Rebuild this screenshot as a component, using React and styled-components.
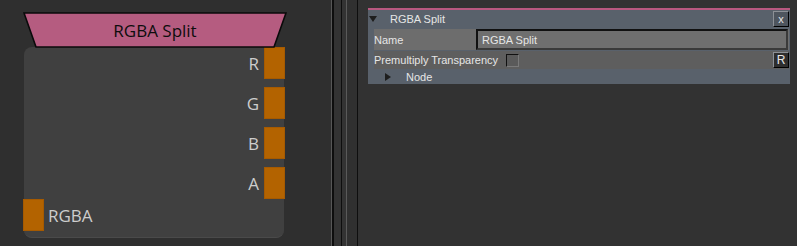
import styled, { createGlobalStyle } from "styled-components";

const Global = createGlobalStyle`
    html, body {
        margin: 0;
        padding: 0;
        background: #2f2f2f;
        overflow: hidden;
    }
`;

const Page = styled.div`
    display: flex;
    width: 797px;
    height: 246px;
`;

const GraphPane = styled.div`
    width: 331px;
    flex-shrink: 0;
    background: #2f2f2f;
    padding: 12px 0 0 23px;
    box-sizing: border-box;
`;

const Splitter = styled.div`
    width: ${(p) => p.w}px;
    flex-shrink: 0;
    background: ${(p) => p.c};
`;

const PropsPane = styled.div`
    flex: 1;
    background: #323232;
    padding: 8px 0 0 10px;
`;

/* ---------- node ---------- */

const Node = styled.div`
    width: 264px;
    font-family: "Open Sans", "Noto Sans", sans-serif;
`;

const Title = styled.div`
    position: relative;
    height: 35px;
    display: flex;
    align-items: center;
    justify-content: center;
    font-size: 17px;
    color: #0d0d0d;

    svg {
        position: absolute;
        inset: 0;
    }

    span {
        position: relative;
        margin-left: 0px;
        margin-top: 1px;
    }
`;

const Body = styled.div`
    margin-left: 1px;
    width: 260px;
    height: 191px;
    box-sizing: border-box;
    background: #404040;
    border-radius: 8px;
    border-bottom: 1px solid #4a4a4a;
    display: flex;
    flex-direction: column;
    justify-content: space-between;
    padding-bottom: 6px;
`;

const Outputs = styled.div`
    display: flex;
    flex-direction: column;
    gap: 8px;
    margin-right: -1px;
`;

const PortRow = styled.div`
    display: flex;
    align-items: center;
    justify-content: ${(p) => (p.$input ? "flex-start" : "flex-end")};
    gap: ${(p) => (p.$input ? 4 : 5)}px;
    height: 32px;
    margin-left: ${(p) => (p.$input ? -1 : 0)}px;
`;

const Port = styled.div`
    width: 21px;
    height: 32px;
    background: #b36300;
    box-shadow: inset 0 0 0 1px #a65a00;
`;

const PortLabel = styled.span`
    font-size: 17px;
    color: #cdcdcd;
    line-height: 1;
`;

/* ---------- properties ---------- */

const Panel = styled.div`
    width: 422px;
    background: #59616b;
    border-top: 2px solid #b8587f;
    font-family: "Liberation Sans", Arial, sans-serif;
    font-size: 11px;
    color: #e6e6e6;
`;

const HeaderRow = styled.div`
    display: flex;
    align-items: center;
    height: 18px;
    padding: 0 1px 1px 1px;
`;

const Tri = styled.span`
    width: 0;
    height: 0;
    border-style: solid;
    border-color: transparent;
    ${(p) =>
        p.$open
            ? "border-width: 6px 4px 0 4px; border-top-color: #1e1e1e;"
            : "border-width: 4px 0 4px 6px; border-left-color: #1e1e1e;"}
`;

const HeaderTitle = styled.span`
    margin-left: 13px;
    flex: 1;
`;

const Bevel = styled.button`
    width: 16px;
    height: 16px;
    padding: 0;
    font-family: inherit;
    font-size: ${(p) => (p.$small ? 11 : 12)}px;
    color: #e6e6e6;
    line-height: 12px;
    background: ${(p) => p.bg};
    border: 1px solid;
    border-color: #8c9096 #000 #000 #8c9096;
    box-sizing: border-box;
    display: flex;
    align-items: center;
    justify-content: center;
`;

const Rows = styled.div`
    margin-left: 6px;
    margin-right: 1px;
    display: flex;
    flex-direction: column;
    gap: 1px;
`;

const NameRow = styled.div`
    display: flex;
    height: 21px;
    background: #6d6d6d;
`;

const Label = styled.div`
    width: 102px;
    display: flex;
    align-items: center;
`;

const Field = styled.div`
    flex: 1;
    display: flex;
    align-items: center;
    padding-left: 4px;
    background: #6f6f6f;
    border: 2px solid;
    border-color: #111 #3a3a3a #3a3a3a #111;
    margin-right: 1px;
`;

const CheckRow = styled.div`
    display: flex;
    align-items: center;
    height: 18px;
    background: #5e5e5e;
    padding-right: 0;
`;

const CheckText = styled.span`
    width: 132px;
`;

const Check = styled.span`
    width: 13px;
    height: 13px;
    box-sizing: border-box;
    background: #5a5a5a;
    border: 1px solid;
    border-color: #111 #7a7a7a #7a7a7a #111;
    margin-right: auto;
`;

const GroupRow = styled.div`
    display: flex;
    align-items: center;
    height: 15px;
    padding-left: 2px;

    span {
        margin-left: 15px;
    }
`;

export default function App() {
    const outputs = ["R", "G", "B", "A"];
    return (
        <>
            <Global />
            <Page>
                <GraphPane>
                    <Node>
                        <Title>
                            <svg width="264" height="36" viewBox="0 0 264 36">
                                <polygon
                                    points="1,1 263,1 251,35 13,35"
                                    fill="#b55c80"
                                    stroke="#0a0a0a"
                                    strokeWidth="1.6"
                                />
                            </svg>
                            <span>RGBA Split</span>
                        </Title>
                        <Body>
                            <Outputs>
                                {outputs.map((o) => (
                                    <PortRow key={o}>
                                        <PortLabel>{o}</PortLabel>
                                        <Port />
                                    </PortRow>
                                ))}
                            </Outputs>
                            <PortRow $input>
                                <Port />
                                <PortLabel>RGBA</PortLabel>
                            </PortRow>
                        </Body>
                    </Node>
                </GraphPane>
                <Splitter w={1} c="#575757" />
                <Splitter w={2} c="#0e0e0e" />
                <Splitter w={7} c="#333333" />
                <Splitter w={1} c="#0e0e0e" />
                <Splitter w={4} c="#333333" />
                <Splitter w={1} c="#5a5a5a" />
                <Splitter w={10} c="#303030" />
                <Splitter w={1} c="#0e0e0e" />
                <PropsPane>
                    <Panel>
                        <HeaderRow>
                            <Tri $open />
                            <HeaderTitle>RGBA Split</HeaderTitle>
                            <Bevel bg="#4e555e" $small>x</Bevel>
                        </HeaderRow>
                        <Rows>
                            <NameRow>
                                <Label>Name</Label>
                                <Field>RGBA Split</Field>
                            </NameRow>
                            <CheckRow>
                                <CheckText>Premultiply Transparency</CheckText>
                                <Check />
                                <Bevel bg="#2e2e2e">R</Bevel>
                            </CheckRow>
                        </Rows>
                        <GroupRow>
                            <Tri />
                            <span>Node</span>
                        </GroupRow>
                    </Panel>
                </PropsPane>
            </Page>
        </>
    );
}
